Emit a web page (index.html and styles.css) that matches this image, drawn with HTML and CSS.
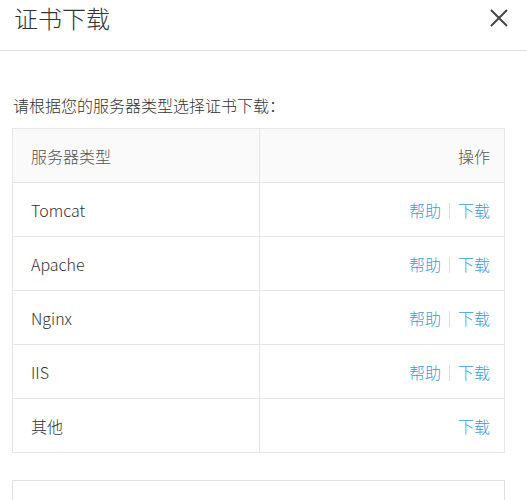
FILE: index.html
```html
<!DOCTYPE html>
<html lang="zh">
<head>
<meta charset="utf-8">
<title>证书下载</title>
<link rel="stylesheet" href="styles.css">
</head>
<body>
<div class="dialog">
  <div class="dialog-header">
    <h1 class="dialog-title">证书下载</h1>
    <span class="close" aria-label="关闭">
      <svg width="20" height="20" viewBox="0 0 20 20"><path d="M2 2L18 18M18 2L2 18" stroke="#444" stroke-width="2" fill="none"/></svg>
    </span>
  </div>
  <div class="dialog-body">
    <p class="hint">请根据您的服务器类型选择证书下载：</p>
    <table class="server-table">
      <thead>
        <tr><th class="col-type">服务器类型</th><th class="col-op">操作</th></tr>
      </thead>
      <tbody>
        <tr><td>Tomcat</td><td class="col-op"><a class="link">帮助</a><span class="sep"></span><a class="link">下载</a></td></tr>
        <tr><td>Apache</td><td class="col-op"><a class="link">帮助</a><span class="sep"></span><a class="link">下载</a></td></tr>
        <tr><td>Nginx</td><td class="col-op"><a class="link">帮助</a><span class="sep"></span><a class="link">下载</a></td></tr>
        <tr><td>IIS</td><td class="col-op"><a class="link">帮助</a><span class="sep"></span><a class="link">下载</a></td></tr>
        <tr><td>其他</td><td class="col-op"><a class="link">下载</a></td></tr>
      </tbody>
    </table>
    <div class="next-box"></div>
  </div>
</div>
</body>
</html>
```
FILE: styles.css
```css
* { box-sizing: border-box; }
html, body {
  margin: 0;
  padding: 0;
  background: #fff;
  font-family: "Noto Sans CJK SC", "Noto Sans", sans-serif;
  font-weight: 300;
  color: #333;
}
.dialog-header {
  height: 51px;
  border-bottom: 1px solid #dedede;
  display: flex;
  justify-content: space-between;
  align-items: flex-start;
  padding: 0 18px 0 14px;
}
.dialog-title {
  margin: 0;
  font-size: 24px;
  font-weight: 300;
  line-height: 36px;
  color: #333;
}
.close {
  display: flex;
  margin-top: 8px;
}
.dialog-body {
  padding: 0 22px 0 12px;
}
.hint {
  margin: 0;
  padding-top: 41px;
  font-size: 16px;
  line-height: 26px;
  height: 77px;
  padding-left: 1px;
  color: #333;
}
.server-table {
  width: 100%;
  border-collapse: collapse;
  font-size: 16px;
}
.server-table th,
.server-table td {
  border: 1px solid #e6e6e6;
  height: 54px;
  padding: 0 14px 0 18px;
  text-align: left;
  font-weight: 300;
  vertical-align: middle;
}
.server-table th {
  background: #fafafa;
  color: #555;
}
.server-table td { color: #333; }
.server-table .col-type { width: 247px; }
.server-table .col-op { text-align: right; }
.link { color: #3a9be0; }
.sep {
  display: inline-block;
  width: 1px;
  height: 16px;
  background: #ddd;
  margin: 0 8px;
  vertical-align: -2px;
}
.next-box {
  margin-top: 27px;
  height: 40px;
  border: 1px solid #e0e0e0;
  border-bottom: none;
}
```
